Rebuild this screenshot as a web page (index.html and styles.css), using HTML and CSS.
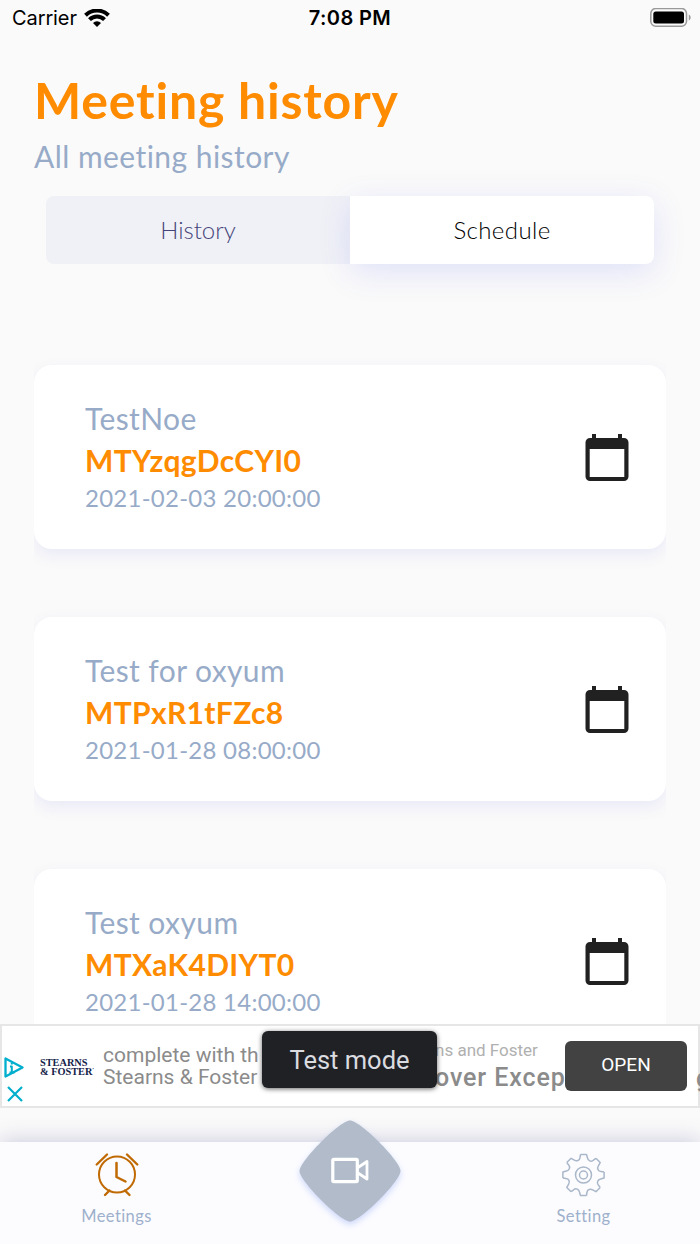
FILE: index.html
```html
<!DOCTYPE html>
<html lang="en">
<head>
  <meta charset="UTF-8" />
  <meta name="viewport" content="width=device-width, initial-scale=1.0"/>
  <title>Meeting history</title>
  <link rel="stylesheet" href="styles.css">
</head>
<body>
  <!-- Shared icons -->
  <svg class="sprite">
    <symbol id="calendar" viewBox="0 0 44 48">
      <path d="M7 0h4v4h22V0h4v4h2a4.500 4.500 0 0 1 4.500 4.500V42.500a4.500 4.500 0 0 1-4.500 4.500H5A4.500 4.500 0 0 1 .5 42.500V8.500A4.500 4.500 0 0 1 5 4h2zM4.700 15v28h34.600V15z" fill="#212121"/>
    </symbol>
  </svg>

  <div class="page">
    <!-- Status bar -->
    <div class="status-bar">
      <div class="carrier">
        <span class="carrier-name">Carrier</span>
        <svg width="26" height="19" viewBox="0 0 26 19">
          <path d="M1.500 6.200a16.500 16.500 0 0 1 23 0M5.500 10.700a10.500 10.500 0 0 1 15 0" fill="none" stroke="#000" stroke-width="4"/>
          <path d="M13 18l-4-4a5.700 5.700 0 0 1 8 0z"/>
        </svg>
      </div>
      <div class="time">7:08 PM</div>
      <svg class="battery" width="42" height="20" viewBox="0 0 42 20">
        <rect x=".8" y="0.500" width="35.700" height="17.800" rx="5" fill="none" stroke="#999" stroke-width="1.500"/>
        <rect x="3.300" y="3.500" width="30.700" height="12" rx="2.500"/>
        <path d="M38.800 6.500v6c2.400-1 2.400-5 0-6z" fill="#999"/>
      </svg>
    </div>

    <!-- Header -->
    <div class="header">
      <h1 class="title">Meeting history</h1>
      <div class="subtitle">All meeting history</div>
      <div class="tabs">
        <div class="tab">History</div>
        <div class="tab active">Schedule</div>
      </div>
    </div>

    <!-- Meeting list -->
    <div class="list">
      <div class="card">
        <div class="info">
          <div class="name">TestNoe</div>
          <div class="code">MTYzqgDcCYI0</div>
          <div class="date">2021-02-03 20:00:00</div>
        </div>
        <svg class="calendar"><use href="#calendar"/></svg>
      </div>
      <div class="card">
        <div class="info">
          <div class="name">Test for oxyum</div>
          <div class="code">MTPxR1tFZc8</div>
          <div class="date">2021-01-28 08:00:00</div>
        </div>
        <svg class="calendar"><use href="#calendar"/></svg>
      </div>
      <div class="card">
        <div class="info">
          <div class="name">Test oxyum</div>
          <div class="code">MTXaK4DIYT0</div>
          <div class="date">2021-01-28 14:00:00</div>
        </div>
        <svg class="calendar"><use href="#calendar"/></svg>
      </div>
    </div>

    <!-- Ad banner -->
    <div class="ad">
      <div class="ad-controls">
        <svg width="20" height="22" viewBox="0 0 20 22" fill="none" stroke="#00aecd" stroke-width="2.300" stroke-linejoin="round">
          <path d="M1.500 1.500v18L18.500 10.500z"/>
          <path d="M6 9.500h1.800v6M5.500 15.500h5M7.800 5.500v2" stroke-width="2"/>
        </svg>
        <svg width="16" height="16" viewBox="0 0 16 16" fill="none" stroke="#00aecd" stroke-width="2.200">
          <path d="M1 1l14 14M15 1L1 15"/>
        </svg>
      </div>
      <div class="ad-logo">STEARNS<br>&amp; FOSTER<sup>’</sup></div>
      <div class="ad-text">complete with th<br>Stearns &amp; Foster</div>
      <div class="ad-next">
        <div class="ad-brand">ns and Foster</div>
        <div class="ad-head">over Excep</div>
      </div>
      <div class="ad-button">OPEN</div>
      <div class="ad-rest">g</div>
      <div class="toast">Test mode</div>
    </div>

    <!-- Bottom navigation -->
    <div class="nav">
      <div class="nav-item">
        <svg width="44" height="46" viewBox="0 0 44 46" fill="none" stroke="#c06a04" stroke-linecap="round">
          <circle cx="22" cy="22.500" r="18" stroke-width="2"/>
          <path d="M21.500 11v14l9 4.500" stroke-width="2.500" stroke-linejoin="round"/>
          <path d="M1.700 12.500L12 2.500M32 2.500l10.300 10M14.500 38.500L10 43M30 38.500l4.500 4.500" stroke-width="2.400"/>
        </svg>
        <span>Meetings</span>
      </div>
      <div class="nav-item">
        <svg width="44" height="46" viewBox="-21.500 -23 44 46" fill="none" stroke="#a9b7c9" stroke-width="1.500" stroke-linejoin="round">
          <g id="half">
            <g id="quarter">
              <path id="tooth" d="M-3 -20.600H3L4 -17C4.600 -14.500 7.500 -12.700 9.900 -14.800L12.450 -16.700"/>
              <use href="#tooth" transform="rotate(45)"/>
            </g>
            <use href="#quarter" transform="rotate(90)"/>
          </g>
          <use href="#half" transform="rotate(180)"/>
          <circle r="8"/>
          <circle r="4"/>
        </svg>
        <span>Setting</span>
      </div>
      <div class="fab">
        <svg width="102" height="102" viewBox="0 0 102 102">
          <path d="M51 .5C61 .5 101.500 41 101.500 51C101.500 61 61 101.500 51 101.500C41 101.500 .5 61 .5 51C.5 41 41 .5 51 .5Z" fill="#b1bbca"/>
          <rect x="33.800" y="39.400" width="24.500" height="22.200" rx="1" fill="none" stroke="#fff" stroke-width="3.200"/>
          <path d="M59 47.500l9-6v17.500l-9-6" fill="none" stroke="#fff" stroke-width="2.800" stroke-linejoin="round"/>
        </svg>
      </div>
    </div>
  </div>
</body>
</html>
```
FILE: styles.css
```css
* {
  margin: 0;
  padding: 0;
  box-sizing: border-box;
}

body {
  font-family: Lato, "Open Sans", sans-serif;
  font-variant-ligatures: none;
  background: #fafafa;
  height: 1244px;
  overflow: hidden;
}

svg {
  display: block;
  flex: none;
}

.sprite {
  width: 0;
  height: 0;
  position: absolute;
}

.page {
  height: 1244px;
  display: flex;
  flex-direction: column;
  white-space: nowrap;
}

/* Status bar */
.status-bar {
  display: grid;
  grid-template-columns: 1fr auto 1fr;
  height: 36px;
  padding: 0 8px 2px 12px;
  align-items: center;
  font-family: Inter, sans-serif;
  font-size: 20px;
  line-height: 36px;
  color: #000;
}

.carrier {
  display: flex;
  align-items: center;
  gap: 8px;
}

.carrier-name {
  width: 64px;
  letter-spacing: -0.1px;
}

.time {
  font-weight: 600;
  letter-spacing: 0.4px;
  margin-right: 4px;
}

.battery {
  justify-self: end;
}

/* Header */
.header {
  height: 329px;
  padding: 32px 34px 0;
}

.title {
  height: 64px;
  line-height: 64px;
  font-size: 50px;
  font-weight: 700;
  letter-spacing: 0.8px;
  color: #ff8c00;
}

.subtitle {
  height: 64px;
  padding-top: 4px;
  line-height: 40px;
  font-size: 30px;
  letter-spacing: 0.45px;
  color: #97abc8;
}

.tabs {
  display: flex;
  height: 68px;
  margin: 0 12px;
  border-radius: 8px;
  background: #f0f1f6;
}

.tab {
  flex: 1;
  text-align: center;
  line-height: 67px;
  font-size: 24px;
  font-weight: 300;
  color: #45447a;
}

.tab.active {
  background: #fff;
  color: #000;
  letter-spacing: 0.4px;
  border-radius: 0 8px 8px 0;
  box-shadow: 0 8px 32px rgba(90, 100, 240, 0.16);
}

/* Cards */
.list {
  height: 679px;
  margin-top: -20px;
  padding: 20px 34px 0;
  display: flex;
  flex-direction: column;
  gap: 68px;
  overflow: hidden;
}

.card {
  flex: none;
  display: flex;
  align-items: center;
  justify-content: space-between;
  height: 184px;
  padding: 0 37px 0 51px;
  border-radius: 18px;
  background: #fff;
  box-shadow: 0 6px 16px rgba(100, 100, 230, 0.11);
  clip-path: inset(-20px 0 -30px 0);
}

.info {
  padding-bottom: 2px;
}

.name {
  font-size: 30px;
  line-height: 42px;
  letter-spacing: 0.4px;
  color: #97abc8;
}

.code {
  font-size: 30px;
  line-height: 42px;
  font-weight: 700;
  letter-spacing: 0.35px;
  color: #ff8c00;
}

.date {
  font-size: 24px;
  line-height: 34px;
  letter-spacing: 0.25px;
  color: #97abc8;
}

.calendar {
  width: 44px;
  height: 48px;
  margin-top: 1px;
}

/* Ad banner */
.ad {
  position: relative;
  height: 84px;
  display: flex;
  align-items: center;
  border: 2px solid #e6e6e6;
  background: #fff;
  font-family: Roboto, sans-serif;
}

.ad-controls {
  width: 38px;
  padding: 27px 0 0 2px;
  display: flex;
  flex-direction: column;
  gap: 7px;
}

.ad-controls svg + svg {
  margin-left: 3px;
}

.ad-logo {
  width: 63px;
  padding-top: 1px;
  font-family: "Liberation Serif", serif;
  font-weight: 700;
  font-size: 10.3px;
  line-height: 9px;
  color: #142248;
}

.ad-logo sup {
  font-size: 5px;
  line-height: 0;
}

.ad-text {
  width: 332px;
  font-size: 21px;
  line-height: 22px;
  color: #8b8b8b;
}

.ad-next {
  width: 129px;
  padding-bottom: 1px;
}

.ad-brand {
  font-size: 17px;
  line-height: 24px;
  color: #b0b0b0;
}

.ad-head {
  font-size: 25px;
  line-height: 31px;
  font-weight: 500;
  letter-spacing: 0.9px;
  color: #8b8b8b;
}

.ad-button {
  flex: none;
  position: relative;
  width: 122px;
  height: 50px;
  margin-left: -1px;
  border-radius: 6px;
  background: #424242;
  color: #fff;
  font-size: 19px;
  line-height: 48px;
  text-align: center;
}

.ad-controls,
.ad-logo,
.ad-text,
.ad-next {
  flex: none;
}

.ad-button {
  margin-left: 1px;
}

.ad-rest {
  flex: none;
  margin-left: 9px;
  padding-top: 24px;
  font-size: 25px;
  font-weight: 500;
  color: #8b8b8b;
}

.toast {
  position: absolute;
  left: 260px;
  top: 5px;
  width: 175px;
  height: 57px;
  border-radius: 6px;
  background: #202125;
  box-shadow: 0 1px 5px rgba(0, 0, 0, 0.6);
  color: #dadce0;
  font-size: 25.5px;
  line-height: 58px;
  text-align: center;
}

/* Bottom navigation */
.nav {
  position: relative;
  height: 102px;
  margin-top: 34px;
  padding: 10px 0 0;
  display: flex;
  justify-content: space-between;
  background: #fcfcff;
  box-shadow: 0 -2px 20px rgba(80, 80, 150, 0.26);
  clip-path: inset(-33px 0 0 0);
}

.nav-item {
  width: 233px;
  display: flex;
  flex-direction: column;
  align-items: center;
  font-size: 16.5px;
  line-height: 36px;
  letter-spacing: 0.4px;
  color: #9eb0cb;
}

.fab {
  position: absolute;
  left: 299px;
  top: -22px;
  filter: drop-shadow(0 3px 3px rgba(120, 150, 240, 0.35));
}
```
